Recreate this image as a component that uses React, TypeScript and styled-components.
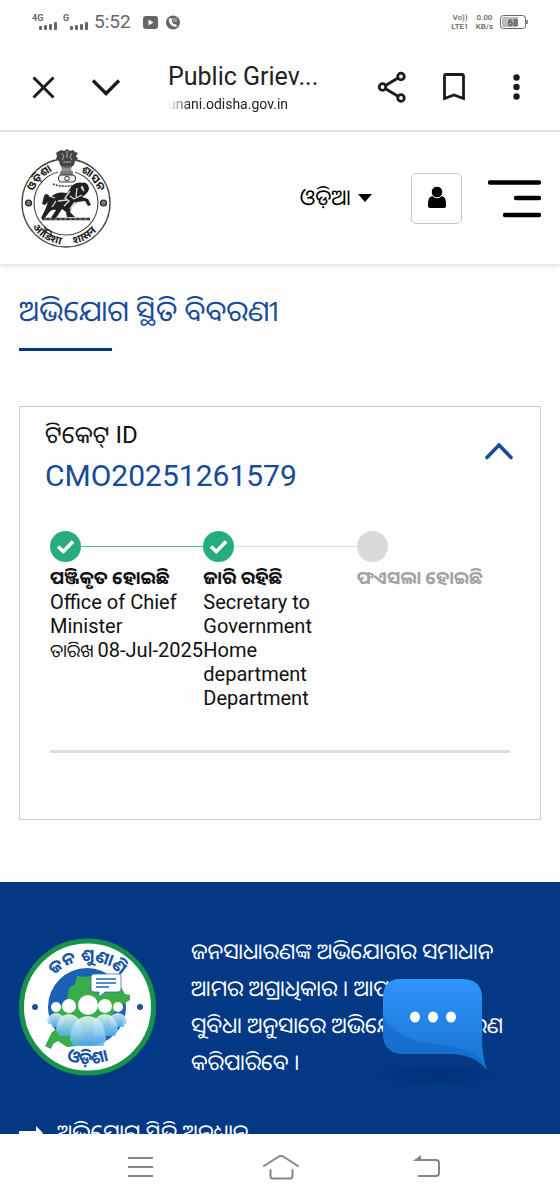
import React from 'react';
import styled, { createGlobalStyle } from 'styled-components';

const GlobalStyle = createGlobalStyle`
  * { box-sizing: border-box; }
  body { margin: 0; background: #fff; }
  button, select { font: inherit; color: inherit; }
  h1, h2, p, ol { margin: 0; padding: 0; }
`;

const navy = '#023884';
const blue = '#164b97';
const green = '#27ad7d';
const fonts = "Roboto, 'Noto Sans Oriya', 'Noto Sans', sans-serif";

const Screen = styled.div`
  height: 100vh;
  display: flex;
  flex-direction: column;
  font-family: ${fonts};
  color: #111;
  background: #fefefe;
`;

const StatusBar = styled.div`
  flex: none;
  height: 44px;
  padding: 0 32px;
  display: flex;
  align-items: center;
  justify-content: space-between;
  color: #666;
`;

const StatusGroup = styled.div<{ $gap: number }>`
  display: flex;
  align-items: center;
  gap: ${(p) => p.$gap}px;
`;

const Clock = styled.span`
  font-size: 19px;
  line-height: 24px;
`;

const TinyStack = styled.span`
  display: flex;
  flex-direction: column;
  align-items: center;
  font-size: 8px;
  line-height: 9px;
  font-weight: 500;
`;

const BrowserBar = styled.header`
  flex: none;
  height: 88px;
  padding: 0 28px 0 27px;
  display: flex;
  align-items: center;
  border-bottom: 2px solid #d9e4ea;
`;

const IconButton = styled.button<{ $ml?: number; $mt?: number }>`
  flex: none;
  display: flex;
  padding: 0;
  border: 0;
  background: none;
  margin-left: ${(p) => p.$ml ?? 0}px;
  margin-top: ${(p) => p.$mt ?? 0}px;
`;

const PageTitle = styled.div`
  flex: 1;
  min-width: 0;
  margin-left: 46px;
  padding-top: 4px;
`;

const TitleText = styled.div`
  font-size: 25px;
  line-height: 30px;
  color: #222;
  white-space: nowrap;
`;

const Address = styled.div`
  width: max-content;
  font-size: 14px;
  line-height: 24px;
  color: #222;
  mask-image: linear-gradient(to right, transparent, #000 22px);
`;

const Viewport = styled.main`
  flex: 1;
  min-height: 0;
  overflow: hidden;
`;

const SiteHeader = styled.div`
  height: 132px;
  padding: 0 18px 0 20px;
  display: flex;
  align-items: center;
  background: #fff;
  box-shadow: 0 1px 5px rgba(0, 0, 0, 0.16);
`;

const Language = styled.button`
  display: flex;
  align-items: center;
  gap: 7px;
  margin-left: auto;
  padding: 0;
  border: 0;
  background: none;
  color: #000;
  font-size: 22px;
  line-height: 32px;
`;

const UserButton = styled.button`
  width: 51px;
  height: 51px;
  margin: 0 25px 0 39px;
  padding: 0;
  display: flex;
  align-items: center;
  justify-content: center;
  border: 1px solid #c6c6c6;
  border-radius: 5px;
  background: #fff;
`;

const Content = styled.section`
  padding: 26px 19px 62px;
`;

const Heading = styled.h1`
  font-size: 29px;
  line-height: 42px;
  font-weight: 400;
  color: ${blue};
  &::after {
    content: '';
    display: block;
    width: 93px;
    height: 3px;
    margin-top: 16px;
    background: ${navy};
  }
`;

const Card = styled.article`
  height: 414px;
  margin-top: 55px;
  padding: 12px 30px 0;
  border: 1px solid #ccc;
`;

const CardHead = styled.div`
  display: flex;
  align-items: flex-start;
  justify-content: space-between;
  margin: 0 -4px 0 -5px;
`;

const TicketLabel = styled.p`
  font-size: 24px;
  line-height: 32px;
  color: #111;
`;

const TicketNumber = styled.h2`
  font-size: 30px;
  line-height: 50px;
  font-weight: 400;
  color: ${blue};
`;

const Steps = styled.ol`
  list-style: none;
  display: grid;
  grid-template-columns: repeat(3, minmax(0, 1fr));
  margin-top: 30px;
  height: 222px;
  border-bottom: 3px solid #dedede;
`;

const Step = styled.li`
  min-width: 0;
  font-size: 20px;
  line-height: 24px;
`;

const Track = styled.div<{ $line: string }>`
  display: flex;
  align-items: center;
  margin-bottom: 4px;
  &::after {
    content: '';
    flex: 1;
    height: 1px;
    background: ${(p) => p.$line};
  }
`;

const Dot = styled.span<{ $done: boolean }>`
  width: 31px;
  height: 31px;
  border-radius: 50%;
  display: flex;
  align-items: center;
  justify-content: center;
  background: ${(p) => (p.$done ? green : '#d9d9d9')};
`;

const StepTitle = styled.div<{ $done: boolean }>`
  font-size: 18px;
  font-weight: 700;
  white-space: nowrap;
  color: ${(p) => (p.$done ? '#111' : '#a3a3a3')};
`;

const StepDate = styled.div`
  display: flex;
  align-items: baseline;
  gap: 4px;
  white-space: nowrap;
`;

const DateLabel = styled.span`
  font-size: 18px;
`;

const Office = styled.div`
  width: 130px;
`;

const Footer = styled.footer`
  padding: 51px 19px;
  background: ${navy};
  color: #fff;
`;

const FooterIntro = styled.div`
  display: flex;
  align-items: center;
  gap: 35px;
`;

const FooterText = styled.p`
  font-size: 22px;
  line-height: 37px;
  word-spacing: normal;
  span {
    display: block;
    white-space: nowrap;
  }
`;

const FooterLink = styled.a`
  display: flex;
  align-items: center;
  gap: 14px;
  margin-top: 36px;
  font-size: 22px;
  line-height: 32px;
  color: #fff;
  text-decoration: none;
`;

const ChatButton = styled.button`
  position: fixed;
  right: 60px;
  bottom: 113px;
  padding: 0;
  border: 0;
  background: none;
  display: flex;
`;

const SystemNav = styled.nav`
  flex: none;
  height: 66px;
  padding: 0 119px 0 127px;
  display: flex;
  align-items: center;
  justify-content: space-between;
  background: #fff;
`;

const LogoSvg = styled.svg`
  flex: none;
`;

const Signal = ({ label }: { label: string }) => (
  <svg width="26" height="18" viewBox="0 0 26 18" aria-hidden="true">
    <text x="0" y="8" fontSize="9" fontWeight="700" fill="#666" fontFamily="Roboto, sans-serif">{label}</text>
    <g fill="#666">
      <rect x="7" y="13" width="3" height="4" rx="1" />
      <rect x="12" y="12" width="3" height="5" rx="1" />
      <rect x="17" y="11" width="3" height="6" rx="1" />
      <rect x="22" y="9" width="3" height="8" rx="1" />
    </g>
  </svg>
);

const Tick = () => (
  <svg width="19" height="16" viewBox="0 0 19 16" fill="none" stroke="#fff" strokeWidth="3.6" aria-hidden="true">
    <path d="M2 7.5l5.3 5L17 2.5" />
  </svg>
);

const Emblem = () => (
  <svg width="92" height="100" viewBox="0 0 92 100" role="img" aria-label="Government of Odisha">
    <g fill="none" stroke="#444">
      <circle cx="46" cy="55" r="44" strokeWidth="1.3" />
      <circle cx="46" cy="55" r="32" strokeWidth="1.1" />
    </g>
    <path d="M38 22h17v12H38z" fill="#fff" />
    <g fill="#444">
      <path d="M39 3l3-1 2 1 3-2 3 2 3-1 2 2 3 1-2 3 2 3-3 2-1 4-4 3h-6l-4-3-1-4-3-2 1-3-1-3z" />
      <path d="M41 17h11l-1 5 2 2v4H40v-4l2-2z" opacity=".7" />
    </g>
    <g fill="none" stroke="#ccc" strokeWidth=".8">
      <path d="M42 5l2 4-2 3m5-9v7m5-5l-2 4 2 3M43 14h8M44 18v5m3-5v5m3-5v5" />
    </g>
    <rect x="38.500" y="27" width="17" height="7" rx="3" fill="#eee" stroke="#333" />
    <circle cx="47" cy="30.500" r="2.300" fill="none" stroke="#333" />
    <path d="M33 36q13 5 28-1" fill="none" stroke="#444" strokeWidth="1.600" strokeDasharray="2 1" />
    <path d="M24 48c3-5 5 1 7 1 5-5 10-5 16-4l4-6c3-3 6-5 10-4 5-2 8 2 8 6-1 4-4 6-7 8l6 2 3 6-3 1-3-5-8 1c-4 3-6 6-7 10l5 5h-8l-1-5-4-3-6 9h-5l5-8c-4-1-6 1-8 4l-4 5-3-1 4-8 3-8-3 3-3-1 1-4z" fill="#222" />
    <path d="M50 43l-5 7 4 3-5 5m13-18l-1 9m5-10l3 4m-35 5l6 2m3 3l9-1m7-1l8-4M55 54l-5 7M62 38l2 5m-14 5l4 3m-18 2l-4 6" fill="none" stroke="#ddd" strokeWidth="1.300" />
    <path d="M22 71h48" stroke="#333" strokeWidth="2.400" />
    <path d="M24 71h44" stroke="#aaa" strokeDasharray="3 2" strokeWidth=".8" />
    <g fill="#777" stroke="#222" strokeWidth="1.200">
      <circle cx="8.500" cy="55" r="3" />
      <circle cx="83.500" cy="55" r="3" />
    </g>
    <path id="seal-top" d="M11.500 55a34.500 34.500 0 0 1 69 0" fill="none" />
    <path id="seal-bottom" d="M4.500 55a41.500 41.500 0 0 0 83 0" fill="none" />
    <g fontSize="11" fontWeight="700" fill="#222" fontFamily={fonts}>
      <text><textPath href="#seal-top" startOffset="12">ଓଡ଼ିଶା</textPath></text>
      <text><textPath href="#seal-top" startOffset="69">ଶାସନ</textPath></text>
      <text><textPath href="#seal-bottom" startOffset="26">ओडिशा</textPath></text>
      <text><textPath href="#seal-bottom" startOffset="73">शासन</textPath></text>
    </g>
  </svg>
);

const people = [
  { x: 37, y: 69, r: 5, w: 9, bottom: 89 },
  { x: 99, y: 69, r: 5, w: 9, bottom: 89 },
  { x: 50, y: 68, r: 7, w: 13, bottom: 98 },
  { x: 86, y: 68, r: 7, w: 13, bottom: 98 },
  { x: 69, y: 67, r: 10, w: 18, bottom: 108 },
];

const JanaSunaniLogo = () => (
  <LogoSvg width="137" height="138" viewBox="0 0 137 138" role="img" aria-label="ଜନ ଶୁଣାଣି ଓଡ଼ିଶା">
    <defs>
      <linearGradient id="body" x1="0" y1="0" x2="0" y2="1">
        <stop offset="0" stopColor="#f2fafe" />
        <stop offset="1" stopColor="#4fb0ea" />
      </linearGradient>
      <clipPath id="disc"><path d="M20 20h100v66H106A39 39 0 0 1 32 86H20z" /></clipPath>
    </defs>
    <circle cx="68.500" cy="69" r="66" fill="#fff" stroke="#15934a" strokeWidth="5" />
    <circle cx="68" cy="69" r="39" fill="#1c61b8" />
    <path d="M26 108l7-14 5-3 1-12-6-6 10-7 5-3 2-13 6-4 2-8 9 1 10-2 7 4 7-2 5 5 6 5 4 7 5 1v5l-5 3-7 3-5 8-9 11-17 7-10 14-10 1-9-6-5 3-2 5z" fill="#39ad4a" />
    <g clipPath="url(#disc)">
      {people.map((p) => (
        <g key={p.x}>
          <path
            d={`M${p.x - p.w} ${p.bottom - 6}Q${p.x - p.w + 1} ${p.y + p.r + 2} ${p.x} ${p.y + p.r + 1}Q${p.x + p.w - 1} ${p.y + p.r + 2} ${p.x + p.w} ${p.bottom - 6}L${p.x + p.w - 3} ${p.bottom}H${p.x - p.w + 3}z`}
            fill="url(#body)"
            opacity=".85"
          />
          <circle cx={p.x} cy={p.y} r={p.r} fill="#fff" />
        </g>
      ))}
    </g>
    <path d="M75 36h24q3 0 3 3v12q0 3-3 3H86l-6 5v-5h-5q-3 0-3-3V39q0-3 3-3z" fill="#fff" stroke="#1c61b8" strokeWidth=".7" />
    <path d="M77 41h20M77 45h20M77 49h13" stroke="#1c61b8" strokeWidth="1.400" />
    <circle cx="16" cy="69" r="3" fill="#1b4f96" />
    <circle cx="121" cy="69" r="3" fill="#1b4f96" />
    <path id="logo-top" d="M22.500 69a46 46 0 0 1 92 0" fill="none" />
    <path id="logo-bottom" d="M11.500 69a57 57 0 0 0 114 0" fill="none" />
    <g fontWeight="700" fill="#1b56a3" textAnchor="middle" fontFamily={fonts}>
      <text fontSize="17"><textPath href="#logo-top" startOffset="50%">ଜନ ଶୁଣାଣି</textPath></text>
      <text fontSize="17"><textPath href="#logo-bottom" startOffset="50%">ଓଡ଼ିଶା</textPath></text>
    </g>
  </LogoSvg>
);

const ChatBubble = () => (
  <svg width="124" height="114" viewBox="0 0 124 114" aria-hidden="true">
    <defs>
      <linearGradient id="bubble" x1="0" y1="0" x2="0" y2="1">
        <stop offset="0" stopColor="#2f94fb" />
        <stop offset="1" stopColor="#1872cf" />
      </linearGradient>
      <radialGradient id="shade">
        <stop offset="0" stopColor="#002b70" stopOpacity=".6" />
        <stop offset="1" stopColor="#002b70" stopOpacity="0" />
      </radialGradient>
    </defs>
    <ellipse cx="62" cy="102" rx="62" ry="11" fill="url(#shade)" />
    <path d="M24 6h62q20 0 20 19v37q0 22 5 35-12-15-34-16H24Q7 78 7 61V25Q7 6 24 6z" fill="url(#bubble)" />
    <path d="M7 42v19q0 17 17 20h52q22 1 35 16-7-16-25-21-12-4-28-5Q19 66 7 42z" fill="#0b5fbd" opacity=".4" />
    <g fill="#fff">
      <ellipse cx="39" cy="44" rx="5" ry="5.500" />
      <ellipse cx="57" cy="44" rx="5" ry="5.500" />
      <ellipse cx="75" cy="44" rx="5" ry="5.500" />
    </g>
  </svg>
);

interface StepData {
  title: string;
  done: boolean;
  line: string;
  office?: string;
  date?: string;
}

const steps: StepData[] = [
  { title: 'ପଞ୍ଜିକୃତ ହୋଇଛି', done: true, line: '#4fb492', office: 'Office of Chief Minister', date: '08-Jul-2025' },
  { title: 'ଜାରି ରହିଛି', done: true, line: '#ddd', office: 'Secretary to Government Home department Department' },
  { title: 'ଫଏସଲା ହୋଇଛି', done: false, line: 'transparent' },
];

const App: React.FC = () => (
  <>
    <GlobalStyle />
    <Screen>
      <StatusBar>
        <StatusGroup $gap={5}>
          <Signal label="4G" />
          <Signal label="G" />
          <Clock>5:52</Clock>
          <svg width="44" height="16" viewBox="0 0 44 16" aria-hidden="true">
            <rect x="7" y="2" width="15" height="13" rx="3" fill="#666" />
            <path d="M12.500 5.500v6l5-3z" fill="#fff" />
            <circle cx="37" cy="8.500" r="7" fill="#666" />
            <path d="M33 4.500c-1 5 3 9 8 8l-1-2.500-2 .5-2.500-3 1-1.500-1.500-2z" fill="#fff" />
            <path d="M36 4h5v4h-4z" fill="#999" />
          </svg>
        </StatusGroup>
        <StatusGroup $gap={7}>
          <TinyStack><span>Vo))</span><span>LTE1</span></TinyStack>
          <TinyStack><span>0.00</span><span>KB/s</span></TinyStack>
          <svg width="28" height="16" viewBox="0 0 28 16" aria-hidden="true">
            <rect x=".5" y="1.500" width="25" height="13" rx="3" fill="#fff" stroke="#666" />
            <rect x="2" y="3" width="16" height="10" rx="1" fill="#bbb" />
            <path d="M27 6v4" stroke="#666" strokeWidth="1.500" />
            <text x="13" y="11.500" fontSize="9" fontWeight="700" fill="#555" textAnchor="middle" fontFamily="Roboto, sans-serif">68</text>
          </svg>
        </StatusGroup>
      </StatusBar>

      <BrowserBar>
        <IconButton aria-label="Close">
          <svg width="32" height="32" viewBox="0 0 32 32" fill="none" stroke="#1c1c1c" strokeWidth="3">
            <path d="M6.500 6.500l20 20m0-20l-20 20" />
          </svg>
        </IconButton>
        <IconButton aria-label="Minimise" $ml={31}>
          <svg width="32" height="32" viewBox="0 0 32 32" fill="none" stroke="#1c1c1c" strokeWidth="3.4">
            <path d="M3 9.500L16 22.500 29 9.500" />
          </svg>
        </IconButton>
        <PageTitle>
          <TitleText>Public Griev...</TitleText>
          <Address>unani.odisha.gov.in</Address>
        </PageTitle>
        <IconButton aria-label="Share">
          <svg width="32" height="34" viewBox="0 0 32 34" fill="none" stroke="#1c1c1c" strokeWidth="2.8">
            <circle cx="6.500" cy="17" r="3.300" />
            <circle cx="25" cy="6.500" r="3.300" />
            <circle cx="25" cy="28" r="3.300" />
            <path d="M9.500 15.500l12.500-7.500M9.500 18.700l12.500 7.500" />
          </svg>
        </IconButton>
        <IconButton aria-label="Bookmark" $ml={30}>
          <svg width="32" height="32" viewBox="0 0 32 32" fill="none" stroke="#1c1c1c" strokeWidth="2.8">
            <path d="M6.500 27.500V5q0-1.500 1.500-1.500h16q1.500 0 1.500 1.500v22.500L16 24z" />
          </svg>
        </IconButton>
        <IconButton aria-label="More" $ml={30}>
          <svg width="32" height="32" viewBox="0 0 32 32" fill="#1c1c1c">
            <circle cx="16.500" cy="6.500" r="3.200" />
            <circle cx="16.500" cy="16" r="3.200" />
            <circle cx="16.500" cy="25.500" r="3.200" />
          </svg>
        </IconButton>
      </BrowserBar>

      <Viewport>
        <SiteHeader>
          <Emblem />
          <Language>
            ଓଡ଼ିଆ
            <svg width="14" height="8" viewBox="0 0 14 8" aria-hidden="true"><path d="M0 0h14L7 8z" fill="#000" /></svg>
          </Language>
          <UserButton aria-label="Account">
            <svg width="20" height="24" viewBox="0 0 20 24">
              <path d="M1 18c0-6 2-8 6-8h6c4 0 6 2 6 8v2q0 2-2 2H3q-2 0-2-2z" />
              <circle cx="10" cy="6" r="5.800" stroke="#fff" strokeWidth="1" />
            </svg>
          </UserButton>
          <IconButton aria-label="Menu">
            <svg width="55" height="40" viewBox="0 0 55 40" stroke="#000" strokeWidth="4.400" strokeLinecap="round">
              <path d="M3 4.500h49M29 20h23M18 37h34" />
            </svg>
          </IconButton>
        </SiteHeader>

        <Content>
          <Heading>ଅଭିଯୋଗ ସ୍ଥିତି ବିବରଣୀ</Heading>
          <Card>
            <CardHead>
              <div>
                <TicketLabel>ଟିକେଟ୍ ID</TicketLabel>
                <TicketNumber>CMO20251261579</TicketNumber>
              </div>
              <IconButton aria-label="Collapse ticket" $mt={23}>
                <svg width="30" height="18" viewBox="0 0 30 18" fill="none" stroke={blue} strokeWidth="3.600" strokeLinecap="round">
                  <path d="M3 15.500L15 3l12 12.500" />
                </svg>
              </IconButton>
            </CardHead>
            <Steps>
              {steps.map((s) => (
                <Step key={s.title}>
                  <Track $line={s.line}>
                    <Dot $done={s.done}>{s.done && <Tick />}</Dot>
                  </Track>
                  <StepTitle $done={s.done}>{s.title}</StepTitle>
                  {s.office && <Office>{s.office}</Office>}
                  {s.date && <StepDate><DateLabel>ତାରିଖ</DateLabel>{s.date}</StepDate>}
                </Step>
              ))}
            </Steps>
          </Card>
        </Content>

        <Footer>
          <FooterIntro>
            <JanaSunaniLogo />
            <FooterText>
              <span>ଜନସାଧାରଣଙ୍କ ଅଭିଯୋଗର ସମାଧାନ</span>
              <span>ଆମର ଅଗ୍ରାଧିକାର । ଆପଣମାନଙ୍କ</span>
              <span>ସୁବିଧା ଅନୁସାରେ ଅଭିଯୋଗ ପଞ୍ଜିକରଣ</span>
              <span>କରିପାରିବେ ।</span>
            </FooterText>
          </FooterIntro>
          <FooterLink href="#status">
            <svg width="24" height="14" viewBox="0 0 24 14" fill="#fff" aria-hidden="true">
              <path d="M0 5h17V0l7 7-7 7V9H0z" />
            </svg>
            ଅଭିଯୋଗ ସ୍ଥିତି ଅନୁଧ୍ୟାନ
          </FooterLink>
        </Footer>
      </Viewport>

      <SystemNav>
        <IconButton aria-label="Recent apps">
          <svg width="27" height="24" viewBox="0 0 27 24" stroke="#858585" strokeWidth="2">
            <path d="M1 3h25M1 12h25M1 21h25" />
          </svg>
        </IconButton>
        <IconButton aria-label="Home">
          <svg width="44" height="26" viewBox="0 0 44 26" fill="none" stroke="#858585" strokeWidth="2" strokeLinecap="round">
            <path d="M2 12L16 3q3-2 6 0l14 9M8.500 16v6q0 2.500 2.500 2.500h17q2.500 0 2.500-2.500v-6" />
          </svg>
        </IconButton>
        <IconButton aria-label="Back">
          <svg width="28" height="24" viewBox="0 0 28 24" fill="none" stroke="#858585" strokeWidth="2">
            <path d="M2 5h21q3 0 3 3v10q0 3-3 3H5" />
            <path d="M0 6L8 0v6z" fill="#858585" stroke="none" />
          </svg>
        </IconButton>
      </SystemNav>

      <ChatButton aria-label="Open chat"><ChatBubble /></ChatButton>
    </Screen>
  </>
);

export default App;
